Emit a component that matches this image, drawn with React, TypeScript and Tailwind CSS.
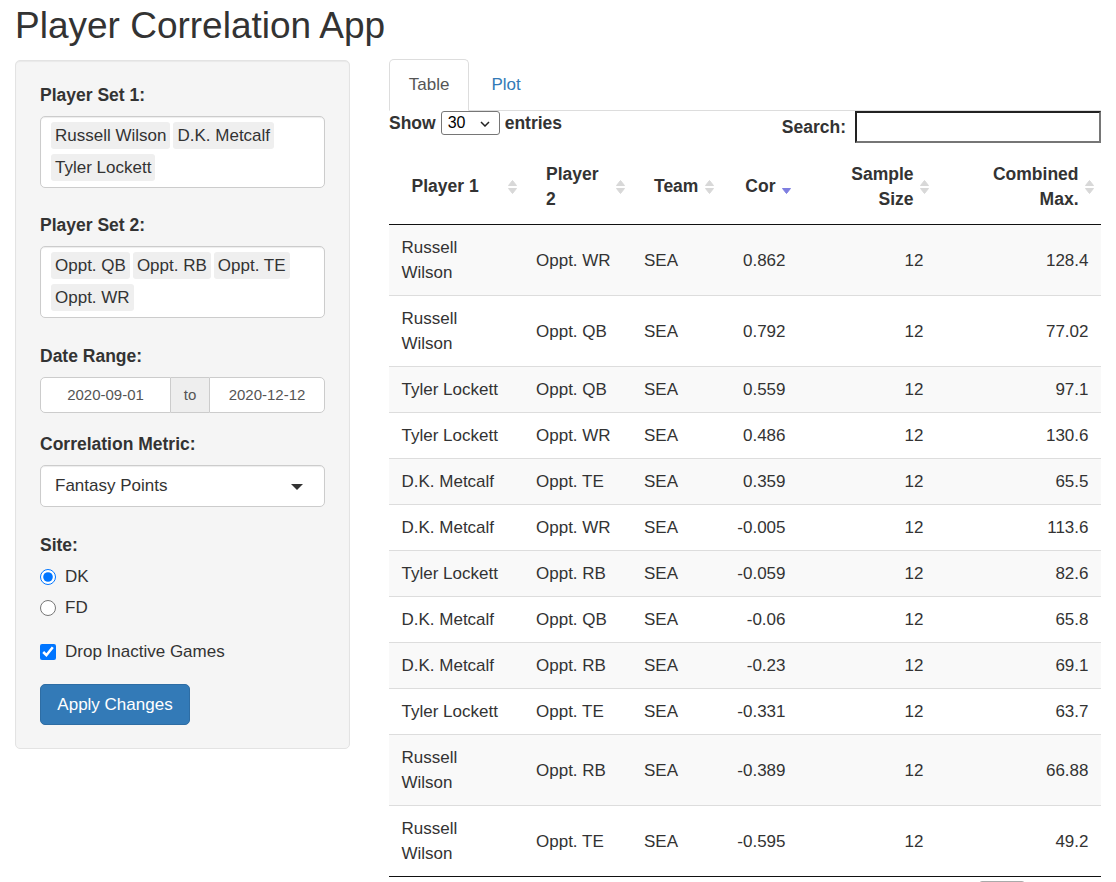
import React from 'react';

type Row = {
  p1: string;
  p2: string;
  team: string;
  cor: string;
  n: number;
  max: string;
};

const rows: Row[] = [
  { p1: 'Russell Wilson', p2: 'Oppt. WR', team: 'SEA', cor: '0.862', n: 12, max: '128.4' },
  { p1: 'Russell Wilson', p2: 'Oppt. QB', team: 'SEA', cor: '0.792', n: 12, max: '77.02' },
  { p1: 'Tyler Lockett', p2: 'Oppt. QB', team: 'SEA', cor: '0.559', n: 12, max: '97.1' },
  { p1: 'Tyler Lockett', p2: 'Oppt. WR', team: 'SEA', cor: '0.486', n: 12, max: '130.6' },
  { p1: 'D.K. Metcalf', p2: 'Oppt. TE', team: 'SEA', cor: '0.359', n: 12, max: '65.5' },
  { p1: 'D.K. Metcalf', p2: 'Oppt. WR', team: 'SEA', cor: '-0.005', n: 12, max: '113.6' },
  { p1: 'Tyler Lockett', p2: 'Oppt. RB', team: 'SEA', cor: '-0.059', n: 12, max: '82.6' },
  { p1: 'D.K. Metcalf', p2: 'Oppt. QB', team: 'SEA', cor: '-0.06', n: 12, max: '65.8' },
  { p1: 'D.K. Metcalf', p2: 'Oppt. RB', team: 'SEA', cor: '-0.23', n: 12, max: '69.1' },
  { p1: 'Tyler Lockett', p2: 'Oppt. TE', team: 'SEA', cor: '-0.331', n: 12, max: '63.7' },
  { p1: 'Russell Wilson', p2: 'Oppt. RB', team: 'SEA', cor: '-0.389', n: 12, max: '66.88' },
  { p1: 'Russell Wilson', p2: 'Oppt. TE', team: 'SEA', cor: '-0.595', n: 12, max: '49.2' },
];

// datatables sort arrows
function SortIcon({ desc = false }: { desc?: boolean }) {
  return (
    <svg
      width="11"
      height="16"
      viewBox="0 0 11 16"
      className="absolute right-[6px] top-1/2 -translate-y-1/2"
    >
      {!desc && (
        <path d="M5.5 1.5 L9.5 6.5 L1.5 6.5 Z" fill="#d8d8d8" stroke="#d8d8d8" strokeLinejoin="round" />
      )}
      <path
        d="M1.5 9.5 L9.5 9.5 L5.5 14.5 Z"
        fill={desc ? '#7e7ee0' : '#d8d8d8'}
        stroke={desc ? '#7e7ee0' : '#d8d8d8'}
        strokeLinejoin="round"
      />
    </svg>
  );
}

function Chip({ label }: { label: string }) {
  return (
    <div className="h-[27px] rounded-[3px] bg-[#efefef] px-[4px] text-[17px] leading-[27px] text-[#333]">
      {label}
    </div>
  );
}

function MultiSelect({ items }: { items: string[] }) {
  return (
    <div className="flex flex-wrap gap-x-[3px] gap-y-[5px] rounded-[5px] border border-[#ccc] bg-white px-[10px] pt-[5px] pb-[6px] shadow-[inset_0_1px_1px_rgba(0,0,0,0.075)]">
      {items.map((it) => (
        <Chip key={it} label={it} />
      ))}
    </div>
  );
}

function FieldLabel({ children }: { children: React.ReactNode }) {
  return <div className="mb-[8px] text-[17.5px] font-bold leading-[25px] text-[#333]">{children}</div>;
}

function Sidebar() {
  return (
    <div className="mt-[1px] w-[335px] shrink-0 rounded-[5px] border border-[#e3e3e3] bg-[#f5f5f5] px-[24px] pt-[22px] pb-[23px] shadow-[inset_0_1px_1px_rgba(0,0,0,0.05)]">
      <FieldLabel>Player Set 1:</FieldLabel>
      <MultiSelect items={['Russell Wilson', 'D.K. Metcalf', 'Tyler Lockett']} />

      <div className="mt-[25px]">
        <FieldLabel>Player Set 2:</FieldLabel>
        <MultiSelect items={['Oppt. QB', 'Oppt. RB', 'Oppt. TE', 'Oppt. WR']} />
      </div>

      <div className="mt-[26px]">
        <FieldLabel>Date Range:</FieldLabel>
        <div className="flex h-[36px] text-[15px] text-[#555]">
          <div className="flex w-[131px] items-center justify-center rounded-l-[5px] border border-[#ccc] bg-white">
            2020-09-01
          </div>
          <div className="flex w-[38px] items-center justify-center border-y border-[#ccc] bg-[#eee]">to</div>
          <div className="flex flex-1 items-center justify-center rounded-r-[5px] border border-[#ccc] bg-white">
            2020-12-12
          </div>
        </div>
      </div>

      <div className="mt-[19px]">
        <FieldLabel>Correlation Metric:</FieldLabel>
        <div className="relative flex h-[42px] items-center rounded-[5px] border border-[#ccc] bg-white pl-[14px] text-[17px] text-[#333] shadow-[inset_0_1px_1px_rgba(0,0,0,0.075)]">
          Fantasy Points
          <svg width="12" height="6" viewBox="0 0 12 6" className="absolute right-[21px] top-[18px]">
            <path d="M0 0 L12 0 L6 6 Z" fill="#333" />
          </svg>
        </div>
      </div>

      <div className="mt-[26px]">
        <div className="text-[17.5px] font-bold leading-[25px] text-[#333]">Site:</div>
        <label className="mt-[6px] flex h-[25px] items-center gap-[9px] text-[17px] text-[#333]">
          <input type="radio" name="site" defaultChecked className="m-0 h-[16px] w-[16px]" />
          DK
        </label>
        <label className="mt-[6px] flex h-[25px] items-center gap-[9px] text-[17px] text-[#333]">
          <input type="radio" name="site" className="m-0 h-[16px] w-[16px]" />
          FD
        </label>
      </div>

      <label className="mt-[19px] flex h-[25px] items-center gap-[9px] text-[17px] text-[#333]">
        <input type="checkbox" defaultChecked className="m-0 h-[16px] w-[16px]" />
        Drop Inactive Games
      </label>

      <button className="mt-[20px] h-[41px] w-[150px] rounded-[5px] border border-[#2e6da4] bg-[#337ab7] text-[17px] text-white">
        Apply Changes
      </button>
    </div>
  );
}

function DataTable() {
  const th = 'relative py-[12.5px] px-[22.5px] align-middle font-bold leading-[25px] text-[17.5px] text-[#333]';
  const td = 'py-[10px] px-[12.5px] align-middle leading-[25px]';
  return (
    <div>
      {/* Length + search */}
      <div className="flex items-start justify-between">
        <div className="flex h-[24px] items-center text-[17.5px] font-bold text-[#333]">
          Show
          <div className="relative mx-[5px] flex h-[24px] w-[59px] items-center rounded-[3px] border border-[#767676] bg-white pl-[6px] text-[16px] font-normal text-black">
            30
            <svg width="10" height="6" viewBox="0 0 10 6" className="absolute right-[9px] top-[9px]">
              <polyline points="1,1 5,5 9,1" fill="none" stroke="#222" strokeWidth="1.5" />
            </svg>
          </div>
          entries
        </div>
        <div className="flex h-[32px] items-center text-[17.5px] font-bold text-[#333]">
          Search:
          <div className="ml-[9px] h-[32px] w-[246px] border-2 border-t-[#222] border-l-[#222] border-r-[#767676] border-b-[#767676] bg-white" />
        </div>
      </div>

      <table className="mt-[6px] w-[712px] table-fixed border-collapse text-[17px] text-[#333]">
        <colgroup>
          <col className="w-[134.5px]" />
          <col className="w-[108px]" />
          <col className="w-[89px]" />
          <col className="w-[77.5px]" />
          <col className="w-[138px]" />
          <col className="w-[165px]" />
        </colgroup>
        <thead>
          <tr className="border-b border-[#111]">
            <th className={`${th} text-left`}>
              Player 1
              <SortIcon />
            </th>
            <th className={`${th} text-left`}>
              Player 2
              <SortIcon />
            </th>
            <th className={`${th} whitespace-nowrap text-left`}>
              Team
              <SortIcon />
            </th>
            <th className={`${th} text-right`}>
              Cor
              <SortIcon desc />
            </th>
            <th className={`${th} text-right`}>
              Sample Size
              <SortIcon />
            </th>
            <th className={`${th} text-right`}>
              Combined Max.
              <SortIcon />
            </th>
          </tr>
        </thead>
        <tbody>
          {rows.map((r, i) => (
            <tr
              key={i}
              className={`${i === 0 ? '' : 'border-t border-[#ddd]'} ${i % 2 === 0 ? 'bg-[#f9f9f9]' : 'bg-white'}`}
            >
              <td className={td}>{r.p1}</td>
              <td className={td}>{r.p2}</td>
              <td className={td}>{r.team}</td>
              <td className={`${td} text-right`}>{r.cor}</td>
              <td className={`${td} text-right`}>{r.n}</td>
              <td className={`${td} text-right`}>{r.max}</td>
            </tr>
          ))}
        </tbody>
      </table>
      <div className="border-t border-[#111]" />

      {/* pagination, cut off by the window */}
      <div className="mt-[4px] flex justify-end pr-[76px]">
        <div className="h-[30px] w-[46px] rounded-[3px] border border-[#aaa] bg-[#f4f4f4]" />
      </div>
    </div>
  );
}

export default function App() {
  return (
    <div className="min-h-screen bg-white px-[15px] font-['Liberation_Sans',Arial,sans-serif] text-[#333]">
      <h2 className="mt-[5px] mb-[13px] text-[37px] font-normal leading-[41px] text-[#333]">Player Correlation App</h2>
      <div className="flex items-start">
        <Sidebar />
        <div className="ml-[39px] w-[712px]">
          {/* Tabs */}
          <div className="flex h-[52px] items-end border-b border-[#ddd]">
            <div className="-mb-[1px] mr-[2.5px] flex h-[52px] items-center rounded-t-[5px] border border-[#ddd] border-b-white bg-white px-[18.75px] text-[17px] text-[#555]">
              Table
            </div>
            <div className="flex h-[51px] items-center px-[19.75px] text-[17px] text-[#337ab7]">Plot</div>
          </div>
          <DataTable />
        </div>
      </div>
    </div>
  );
}
